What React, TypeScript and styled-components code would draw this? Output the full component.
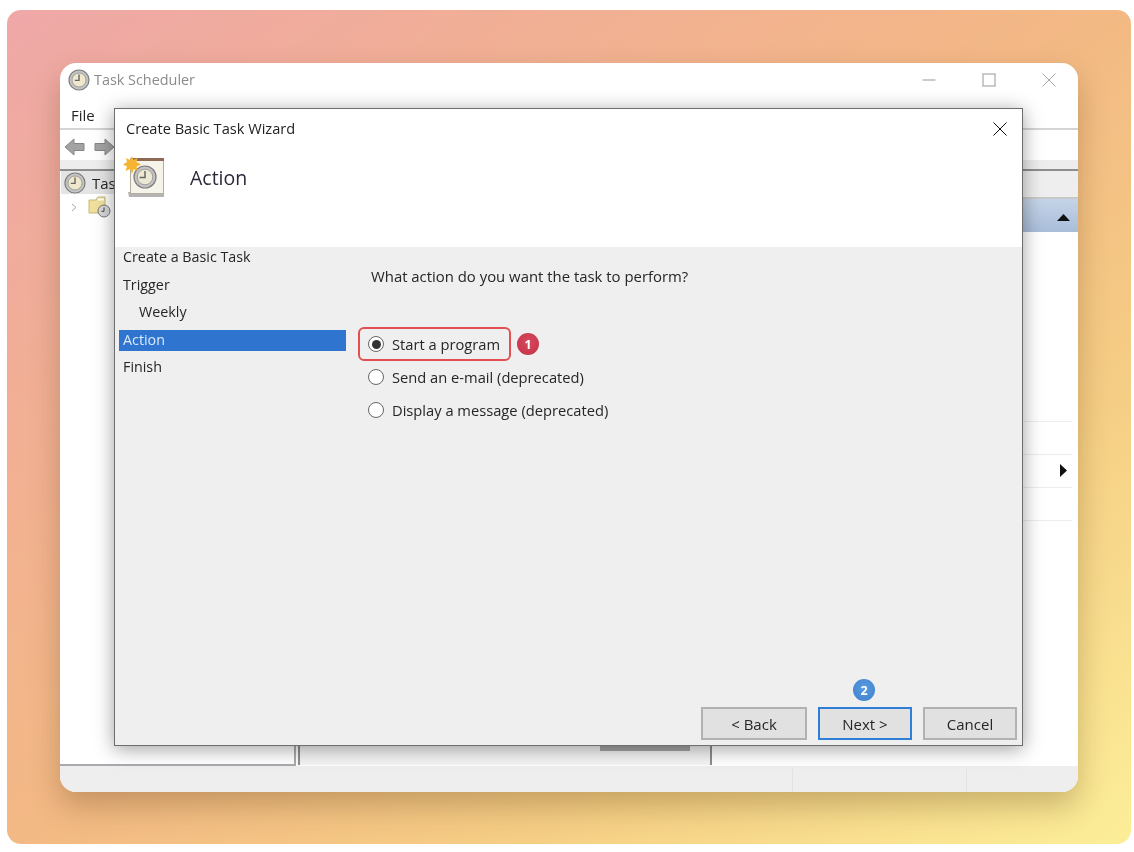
import styled, { createGlobalStyle } from "styled-components";

const GlobalStyle = createGlobalStyle`
  html, body {
    margin: 0;
    padding: 0;
    background: #ffffff;
  }
  body {
    font-family: "Open Sans", "Noto Sans", "Liberation Sans", sans-serif;
    color: #222;
  }
`;

const Backdrop = styled.div`
  width: 1124px;
  height: 834px;
  margin: 10px 0 0 7px;
  padding: 53px 53px 52px 53px;
  box-sizing: border-box;
  border-radius: 14px;
  filter: blur(0.35px);
  background: linear-gradient(
    143deg,
    #efa8a8 0%,
    #f1ae96 22%,
    #f3b984 50%,
    #f5cd84 72%,
    #fcee98 100%
  );
`;

const Window = styled.div`
  position: relative;
  height: 729px;
  display: flex;
  flex-direction: column;
  background: #fff;
  border-radius: 16px;
  box-shadow: 0 14px 30px rgba(80, 50, 10, 0.28);
`;

const TitleBar = styled.div`
  height: 35px;
  box-sizing: border-box;
  display: flex;
  align-items: center;
  padding: 0 22px 1px 8px;
  gap: 4px;
  flex-shrink: 0;
`;

const WindowName = styled.span`
  flex: 1;
  font-size: 14.4px;
  line-height: 18px;
  margin-top: -1px;
  color: #8b8b8b;
`;

const WinControls = styled.div`
  display: flex;
  align-items: center;
  gap: 46px;
`;

const MenuBar = styled.div`
  height: 32px;
  box-sizing: border-box;
  padding: 3px 0 0 11px;
  display: flex;
  align-items: center;
  font-size: 15px;
  color: #262626;
  border-bottom: 2px solid #d4d4d4;
`;

const ToolBar = styled.div`
  height: 30px;
  box-sizing: border-box;
  display: flex;
  align-items: center;
  gap: 9px;
  padding: 3px 0 0 4px;
`;

const Strip = styled.div`
  height: 9px;
  background: #ededed;
  border-bottom: 2px solid #8d8d8d;
`;

const Panes = styled.div`
  flex: 1;
  display: flex;
  min-height: 0;
`;

const TreePane = styled.div`
  width: 236px;
  box-sizing: border-box;
  border-right: 2px solid #a9a9ae;
  border-bottom: 2px solid #a9a9ae;
  margin-right: 2px;
  padding: 0 1px;
`;

const TreeRoot = styled.div`
  height: 23px;
  display: flex;
  align-items: center;
  gap: 6px;
  padding-left: 3px;
  background: #e4e4e4;
  font-size: 15px;
  color: #262626;
`;

const TreeChild = styled.div`
  height: 26px;
  display: flex;
  align-items: center;
  padding-left: 10px;
  gap: 11px;
  color: #a0a0a0;
`;

const MiddlePane = styled.div`
  width: 414px;
  position: relative;
  box-sizing: border-box;
  border-left: 2px solid #8d8d8d;
  border-right: 2px solid #8d8d8d;
  background: #f4f4f4;
  margin-bottom: 1px;
`;

const ScrollThumb = styled.div`
  position: absolute;
  left: 300px;
  bottom: 14px;
  width: 90px;
  height: 6px;
  background: #a4a4a4;
`;

const ActionsPane = styled.div`
  flex: 1;
  display: flex;
  flex-direction: column;
`;

const ActionsHeader = styled.div`
  height: 26px;
  background: #eeeeee;
  border-bottom: 2px solid #c8c8c8;
`;

const ActionsBand = styled.div`
  height: 33px;
  box-sizing: border-box;
  display: flex;
  align-items: center;
  justify-content: flex-end;
  padding: 3px 8px 0 0;
  background: linear-gradient(180deg, #c5d4e8 0%, #a9bdd9 100%);
`;

const ActionList = styled.div`
  margin: 157px 6px 0 0;
`;

const ActionRow = styled.div`
  height: 33px;
  box-sizing: border-box;
  border-bottom: 1px solid #ececec;
  display: flex;
  align-items: center;
  justify-content: flex-end;
  padding: 0 5px 1px 0;
`;

const StatusBar = styled.div`
  height: 26px;
  flex-shrink: 0;
  display: grid;
  grid-template-columns: 733px 174px 1fr;
  background: #eeeeee;
  border-radius: 0 0 16px 16px;
`;

const StatusCell = styled.div`
  margin-top: 3px;
  border-right: 1px solid #e2e2e2;
  &:last-child {
    border-right: none;
  }
`;

const Dialog = styled.div`
  position: absolute;
  left: 54px;
  top: 45px;
  width: 909px;
  height: 638px;
  box-sizing: border-box;
  display: flex;
  flex-direction: column;
  background: #efefef;
  border: 1px solid #6e6e6e;
  box-shadow: 0 3px 18px rgba(0, 0, 0, 0.38);
`;

const DialogTop = styled.div`
  height: 138px;
  flex-shrink: 0;
  background: #fff;
  display: flex;
  flex-direction: column;
`;

const DialogTitleBar = styled.div`
  height: 38px;
  display: flex;
  align-items: center;
  justify-content: space-between;
  padding: 0 15px 0 11px;
  font-size: 14.6px;
  color: #222;
  svg {
    margin-top: 2px;
  }
`;

const DialogHeading = styled.div`
  display: flex;
  align-items: center;
  gap: 25px;
  padding: 9px 0 0 8px;
  font-size: 19.5px;
  color: #2a2a3a;
`;

const DialogBody = styled.div`
  flex: 1;
  display: flex;
  min-height: 0;
`;

const Steps = styled.div`
  width: 227px;
  margin-left: 4px;
  flex-shrink: 0;
`;

const Step = styled.div<{ $active?: boolean; $nested?: boolean }>`
  height: 21px;
  box-sizing: border-box;
  margin-bottom: 6.5px;
  display: flex;
  align-items: center;
  padding: 0 0 2px ${(p) => (p.$nested ? "20px" : "4px")};
  font-size: 14.3px;
  color: ${(p) => (p.$active ? "#dbe8fa" : "#262626")};
  background: ${(p) => (p.$active ? "#2f75d0" : "transparent")};
`;

const Content = styled.div`
  flex: 1;
  padding: 18px 0 0 24px;
  display: flex;
  flex-direction: column;
`;

const Question = styled.div`
  margin-left: 1px;
  font-size: 14.9px;
  line-height: 22px;
  color: #262626;
`;

const RadioGroup = styled.div`
  margin: 46px 0 0 -2px;
  display: flex;
  flex-direction: column;
  gap: 11px;
`;

const RadioRow = styled.div`
  position: relative;
  height: 22px;
  display: flex;
  align-items: center;
  gap: 8px;
  font-size: 14.7px;
  color: #262626;
  width: fit-content;
`;

const RadioDot = styled.span<{ $checked?: boolean }>`
  width: 16px;
  height: 16px;
  box-sizing: border-box;
  border-radius: 50%;
  border: 1.5px solid #666;
  background: #fff;
  display: flex;
  align-items: center;
  justify-content: center;
  &::after {
    content: "";
    display: ${(p) => (p.$checked ? "block" : "none")};
    width: 9px;
    height: 9px;
    border-radius: 50%;
    background: #333;
  }
`;

const Highlight = styled.div`
  position: absolute;
  left: -10px;
  right: -11px;
  top: -6px;
  bottom: -6px;
  border: 2px solid #e2504f;
  border-radius: 6px;
`;

const Badge = styled.div<{ $tone: "red" | "blue" }>`
  position: absolute;
  width: 22px;
  height: 22px;
  border-radius: 50%;
  display: flex;
  align-items: center;
  justify-content: center;
  color: #fff;
  font-size: 12.5px;
  font-weight: 700;
  background: ${(p) =>
    p.$tone === "red"
      ? "radial-gradient(circle at 50% 40%, #d94a5e, #c22f47)"
      : "radial-gradient(circle at 50% 40%, #5b9be0, #3a7fcd)"};
`;

const RowBadge = styled(Badge)`
  right: -39px;
  top: 0;
`;

const Footer = styled.div`
  position: relative;
  height: 38px;
  box-sizing: border-box;
  flex-shrink: 0;
  padding: 0 5px 5px 0;
  display: flex;
  justify-content: flex-end;
  gap: 11px;
`;

const NextBadge = styled(Badge)`
  left: 738px;
  top: -28px;
`;

const WizardButton = styled.div<{ $primary?: boolean; $w: number }>`
  width: ${(p) => p.$w}px;
  box-sizing: border-box;
  display: flex;
  align-items: center;
  justify-content: center;
  font-size: 15px;
  color: #262626;
  background: #e1e1e1;
  border: 2px solid ${(p) => (p.$primary ? "#2f7fd6" : "#b2b2b2")};
`;

const ClockIcon = ({ size = 22 }: { size?: number }) => (
  <svg width={size} height={size} viewBox="0 0 22 22">
    <circle cx="11" cy="11" r="10" fill="#c4c4c4" stroke="#7d7d7d" strokeWidth="1.2" />
    <circle cx="11" cy="11" r="7" fill="#efe8cc" stroke="#8f8f8f" strokeWidth="0.8" />
    <path d="M11 5.5V11.4H6.8" fill="none" stroke="#666" strokeWidth="1.4" />
  </svg>
);

const NavArrow = ({ flip }: { flip?: boolean }) => (
  <svg width="21" height="20" viewBox="0 0 21 20" style={flip ? { transform: "scaleX(-1)" } : undefined}>
    <path d="M1 10L10 2V6.5H20V13.5H10V18Z" fill="#a3a3a3" stroke="#858585" strokeWidth="1" />
  </svg>
);

const FolderClock = () => (
  <svg width="23" height="22" viewBox="0 0 23 22">
    <path d="M1 4H8L10 1H17V17H1Z" fill="#efe09c" stroke="#c9b66e" strokeWidth="1" />
    <rect x="10" y="2.5" width="6" height="2" fill="#fff" />
    <circle cx="16" cy="15" r="6" fill="#d6d6d6" stroke="#777" strokeWidth="1" />
    <path d="M16 11.5V15.3H13.5" fill="none" stroke="#444" strokeWidth="1" />
  </svg>
);

const WizardIcon = () => (
  <svg width="42" height="42" viewBox="0 0 42 42">
    <path d="M6 41L5 36H41V41Z" fill="#b4b4b4" />
    <rect x="7.5" y="2.5" width="33" height="35" fill="#f6f3ea" stroke="#b5aea0" strokeWidth="1" />
    <rect x="8" y="2" width="33" height="3" fill="#8e6a56" />
    <circle cx="22" cy="21" r="11" fill="#c4c4c4" stroke="#7d7d7d" strokeWidth="1.2" />
    <circle cx="22" cy="21" r="7.8" fill="#ece8d4" stroke="#8f8f8f" strokeWidth="0.8" />
    <path d="M22 15V21.5H16.5" fill="none" stroke="#666" strokeWidth="1.5" />
    <path
      d="M9 0L10.5 4L14.5 2L13.5 6L18 8.5L13.5 10.5L15 15L10.5 13L9 18L7 13L2.5 15L4 10.5L0 8.5L4 6L3 2L7 4Z"
      fill="#f5b431"
    />
  </svg>
);

const CloseGlyph = ({ color, size }: { color: string; size: number }) => (
  <svg width={size} height={size} viewBox="0 0 14 14">
    <path d="M0.5 0.5L13.5 13.5M13.5 0.5L0.5 13.5" stroke={color} strokeWidth="1" fill="none" />
  </svg>
);

const MinGlyph = () => (
  <svg width="14" height="14" viewBox="0 0 14 14">
    <path d="M0.5 7H13.5" stroke="#a8a8a8" strokeWidth="1.2" />
  </svg>
);

const MaxGlyph = () => (
  <svg width="14" height="14" viewBox="0 0 14 14">
    <rect x="1" y="1" width="12" height="12" fill="none" stroke="#a8a8a8" strokeWidth="1.2" />
  </svg>
);

const steps = [
  { label: "Create a Basic Task" },
  { label: "Trigger" },
  { label: "Weekly", nested: true },
  { label: "Action", active: true },
  { label: "Finish" },
];

const App = () => {
  return (
    <>
      <GlobalStyle />
      <Backdrop>
        <Window>
          <TitleBar>
            <ClockIcon />
            <WindowName>Task Scheduler</WindowName>
            <WinControls>
              <MinGlyph />
              <MaxGlyph />
              <CloseGlyph color="#a8a8a8" size={14} />
            </WinControls>
          </TitleBar>
          <MenuBar>File</MenuBar>
          <ToolBar>
            <NavArrow />
            <NavArrow flip />
          </ToolBar>
          <Strip />
          <Panes>
            <TreePane>
              <TreeRoot>
                <ClockIcon />
                Task Scheduler
              </TreeRoot>
              <TreeChild>
                <svg width="6" height="9" viewBox="0 0 6 9">
                  <path d="M1 1L5 4.5L1 8" fill="none" stroke="#a8a8a8" strokeWidth="1" />
                </svg>
                <FolderClock />
              </TreeChild>
            </TreePane>
            <MiddlePane>
              <ScrollThumb />
            </MiddlePane>
            <ActionsPane>
              <ActionsHeader />
              <ActionsBand>
                <svg width="13" height="7" viewBox="0 0 13 7">
                  <path d="M6.5 0L13 7H0Z" fill="#111" />
                </svg>
              </ActionsBand>
              <ActionList>
                <ActionRow />
                <ActionRow />
                <ActionRow>
                  <svg width="7" height="13" viewBox="0 0 7 13">
                    <path d="M0 0L7 6.5L0 13Z" fill="#111" />
                  </svg>
                </ActionRow>
                <ActionRow />
              </ActionList>
            </ActionsPane>
          </Panes>
          <StatusBar>
            <StatusCell />
            <StatusCell />
            <StatusCell />
          </StatusBar>
          <Dialog>
            <DialogTop>
              <DialogTitleBar>
                Create Basic Task Wizard
                <CloseGlyph color="#111" size={14} />
              </DialogTitleBar>
              <DialogHeading>
                <WizardIcon />
                Action
              </DialogHeading>
            </DialogTop>
            <DialogBody>
              <Steps>
                {steps.map((s) => (
                  <Step key={s.label} $active={s.active} $nested={s.nested}>
                    {s.label}
                  </Step>
                ))}
              </Steps>
              <Content>
                <Question>What action do you want the task to perform?</Question>
                <RadioGroup>
                  <RadioRow>
                    <RadioDot $checked />
                    Start a program
                    <Highlight />
                    <RowBadge $tone="red">1</RowBadge>
                  </RadioRow>
                  <RadioRow>
                    <RadioDot />
                    Send an e-mail (deprecated)
                  </RadioRow>
                  <RadioRow>
                    <RadioDot />
                    Display a message (deprecated)
                  </RadioRow>
                </RadioGroup>
              </Content>
            </DialogBody>
            <Footer>
              <NextBadge $tone="blue">2</NextBadge>
              <WizardButton $w={106}>&lt; Back</WizardButton>
              <WizardButton $w={94} $primary>
                Next &gt;
              </WizardButton>
              <WizardButton $w={94}>Cancel</WizardButton>
            </Footer>
          </Dialog>
        </Window>
      </Backdrop>
    </>
  );
};

export default App;
